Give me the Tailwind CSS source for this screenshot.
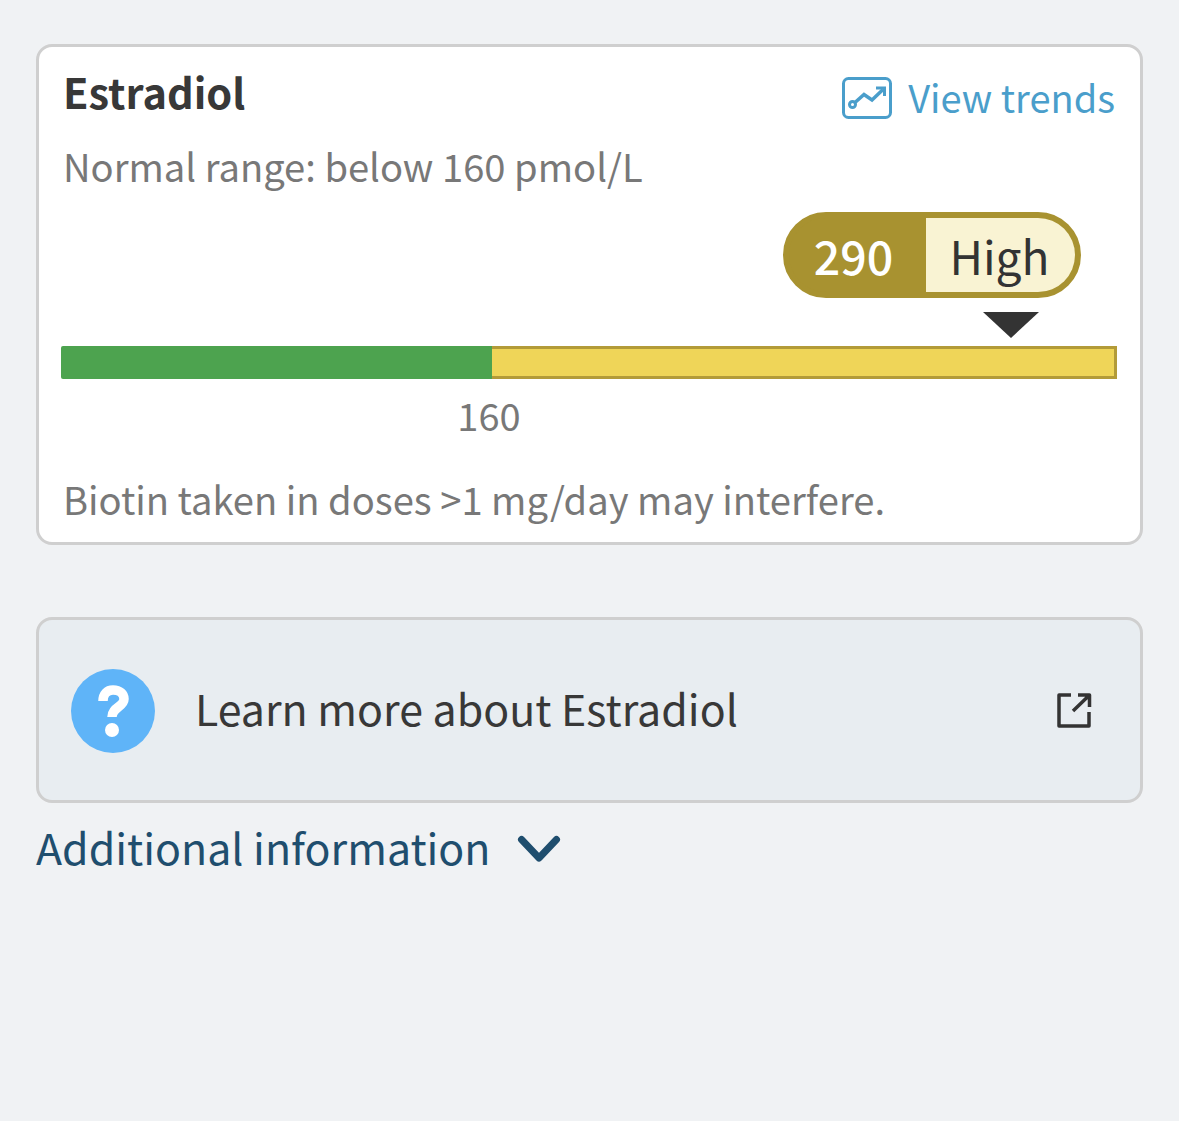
<!DOCTYPE html>
<html><head><script src="https://cdn.jsdelivr.net/npm/@tailwindcss/browser@4"></script></head>
<body class="m-0">
<div class="w-[1179px] h-[1121px] bg-[#f0f2f4] pt-[44px] px-[36px] font-['Noto_Sans_CJK_SC','Noto_Sans',sans-serif] overflow-hidden">
  <div class="h-[501px] bg-white border-[3px] border-[#cfcfcf] rounded-[16px] pl-[24px] pr-[23px] flex flex-col">
    <div class="flex justify-between items-start h-[50px] mt-[19px]">
      <div class="text-[41.5px] leading-[50px] font-semibold text-[#383838]">Estradiol</div>
      <div class="flex items-center gap-[16px] mt-[6px] mr-[2px] text-[#4a9ecb] text-[38px] leading-[50px]">
        <svg class="mt-[2px]" width="50" height="42" viewBox="0 0 50 42" fill="none" stroke="#4a9ecb" stroke-width="3"><rect x="1.5" y="1.5" width="47" height="39" rx="5"/><circle cx="10.5" cy="27.5" r="3"/><path d="M13 25.500l9-8 8 5.500 11-10.500" stroke-width="3.500"/><path d="M34 11h8.500v8" stroke-width="3"/></svg>
        <span>View trends</span>
      </div>
    </div>
    <div class="mt-[27px] text-[38.15px] leading-[46px] text-[#787878]">Normal range: below 160 pmol/L</div>
    <div class="flex justify-end pr-[36px] mt-[23px]">
      <div class="flex h-[86px] w-[298px] rounded-full border-[6px] border-[#a89230] bg-[#a89230] overflow-hidden leading-[74px]">
        <div class="w-[137px] text-[46.5px] text-white text-center font-medium pr-[8px]">290</div>
        <div class="flex-1 text-[46px] bg-[#f9f3d3] text-[#333] text-center pr-[2px]">High</div>
      </div>
    </div>
    <div class="flex justify-end pr-[78px] mt-[14px]">
      <div class="w-0 h-0 border-l-[28px] border-r-[28px] border-t-[26px] border-l-transparent border-r-transparent border-t-[#333]"></div>
    </div>
    <div class="flex h-[33px] -ml-[2px] mt-[8px]">
      <div class="w-[431px] bg-[#4da34f] rounded-l-[2px]"></div>
      <div class="flex-1 bg-[#efd558] border-[3px] border-l-0 border-[#b39b38]"></div>
    </div>
    <div class="mt-[14px] ml-[391px] w-[70px] text-center text-[38px] leading-[44px] text-[#787878]">160</div>
    <div class="mt-[39px] text-[38.15px] leading-[46px] text-[#787878]">Biotin taken in doses &gt;1 mg/day may interfere.</div>
  </div>
  <div class="mt-[72px] h-[186px] bg-[#e8edf1] border-[3px] border-[#cfcfcf] rounded-[16px] flex items-center pl-[32px] pr-[48px]">
    <svg class="mt-[2px]" width="84" height="84" viewBox="0 0 84 84"><circle cx="42" cy="42" r="42" fill="#5fb4f8"/><path d="M32 32C32 25 36 21 42 21C49 21 53 25 53 30C53 38 41 38 41 48" fill="none" stroke="#fff" stroke-width="9.500"/><circle cx="41" cy="61" r="7" fill="#fff"/></svg>
    <div class="ml-[40px] flex-1 pb-[6px] text-[42.9px] leading-[52px] text-[#383838]">Learn more about Estradiol</div>
    <svg width="36" height="36" viewBox="0 0 36 36" fill="none" stroke="#333" stroke-width="3.500" stroke-linejoin="round"><path d="M15 3H3v31h30V20M22 3h11.500v12M33 3.500L17 19"/></svg>
  </div>
  <div class="mt-[15px] flex items-center gap-[26px] text-[#1f4e6e] text-[42.9px] leading-[56px]">
    <span>Additional information</span>
    <svg class="mt-[6px]" width="44" height="28" viewBox="0 0 44 28" fill="none" stroke="#1f4e6e" stroke-width="7" stroke-linecap="round" stroke-linejoin="round"><path d="M4.500 4.500L22 23L39.500 4.500"/></svg>
  </div>
</div>
</body></html>
